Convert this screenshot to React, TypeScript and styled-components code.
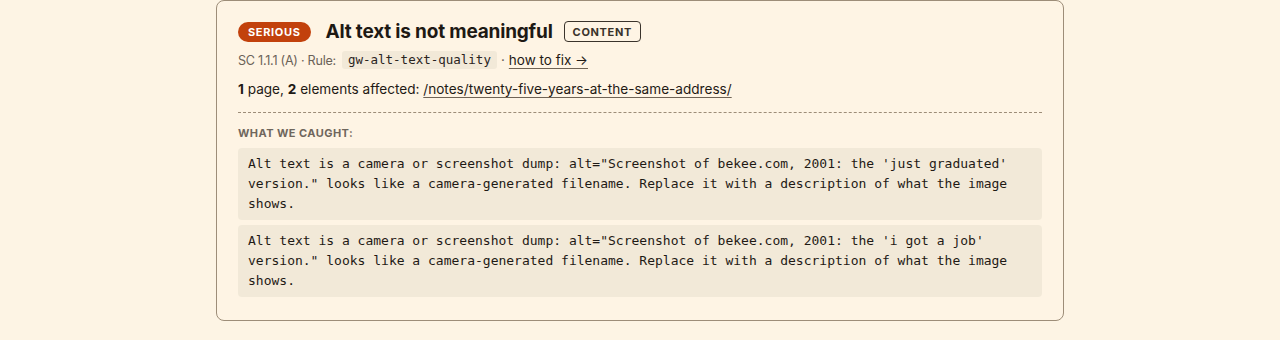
import React from "react";
import styled, { createGlobalStyle } from "styled-components";

const Global = createGlobalStyle`
  html, body { margin: 0; padding: 0; background: #fdf4e4; }
  body { font-family: Inter, "Liberation Sans", sans-serif; color: #1f1a15; }
`;

const Page = styled.div`
  padding: 0 0 19px;
`;

const Card = styled.section`
  box-sizing: border-box;
  width: 848px;
  margin: 0 auto;
  border: 1px solid #9d8d78;
  border-radius: 8px;
  padding: 19px 21px 23px;
  background: #fef4e4;
`;

const Head = styled.div`
  display: flex;
  align-items: center;
`;

const Severity = styled.span`
  display: inline-flex;
  align-items: center;
  height: 20px;
  padding: 0 10px;
  border-radius: 10px;
  background: #c2410c;
  color: #fff;
  font-size: 11px;
  font-weight: 700;
  letter-spacing: 0.06em;
  text-transform: uppercase;
`;

const Title = styled.h2`
  margin: 0 11px 0 15px;
  font-size: 19px;
  font-weight: 700;
  letter-spacing: -0.01em;
  color: #1d1914;
`;

const Tag = styled.span`
  box-sizing: border-box;
  display: inline-flex;
  align-items: center;
  height: 21px;
  padding: 0 8px;
  border: 1px solid #3a332b;
  border-radius: 4px;
  color: #3a332b;
  font-size: 11px;
  font-weight: 700;
  letter-spacing: 0.06em;
  text-transform: uppercase;
`;

const Meta = styled.div`
  margin-top: 8px;
  display: flex;
  align-items: center;
  gap: 4px;
  font-size: 13.5px;
  color: #6b6258;
`;

const Source = styled.span`
  font-size: 12.6px;
  letter-spacing: -0.02em;
  margin-right: 2px;
`;

const Chip = styled.code`
  font-family: "DejaVu Sans Mono", monospace;
  font-size: 12.5px;
  line-height: 18px;
  padding: 0 6px;
  border-radius: 3px;
  background: #f2e9d8;
  color: #2a241e;
`;

const Link = styled.a`
  color: #1f1a15;
  text-decoration: underline;
  text-underline-offset: 3px;
  text-decoration-thickness: 1px;
  text-decoration-color: #6f6355;
`;

const Affected = styled.p`
  margin: 12px 0 0;
  font-size: 13.6px;
  color: #1f1a15;
  b { font-weight: 700; }
`;

const Divider = styled.hr`
  margin: 15px 0 0;
  border: 0;
  border-top: 1px dashed #9d8d78;
`;

const Label = styled.div`
  margin-top: 13px;
  font-size: 11px;
  font-weight: 700;
  letter-spacing: 0.04em;
  text-transform: uppercase;
  color: #6f665c;
`;

const Findings = styled.div`
  margin-top: 8px;
  display: flex;
  flex-direction: column;
  gap: 5px;
`;

const Finding = styled.div`
  padding: 6px 10px;
  border-radius: 4px;
  background: #f2e9d8;
  font-family: "DejaVu Sans Mono", monospace;
  font-size: 13px;
  line-height: 20px;
  color: #1f1a15;
  white-space: pre-wrap;
`;

const findings = [
  `Alt text is a camera or screenshot dump: alt="Screenshot of bekee.com, 2001: the 'just graduated' version." looks like a camera-generated filename. Replace it with a description of what the image shows.`,
  `Alt text is a camera or screenshot dump: alt="Screenshot of bekee.com, 2001: the 'i got a job' version." looks like a camera-generated filename. Replace it with a description of what the image shows.`,
];

export default function App() {
  return (
    <Page>
      <Global />
      <Card>
        <Head>
          <Severity>Serious</Severity>
          <Title>Alt text is not meaningful</Title>
          <Tag>Content</Tag>
        </Head>
        <Meta>
          <Source>SC 1.1.1 (A) · Rule:</Source>
          <Chip>gw-alt-text-quality</Chip>
          <span>·</span>
          <Link href="#">how to fix →</Link>
        </Meta>
        <Affected>
          <b>1</b> page, <b>2</b> elements affected:{" "}
          <Link href="#">/notes/twenty-five-years-at-the-same-address/</Link>
        </Affected>
        <Divider />
        <Label>What we caught:</Label>
        <Findings>
          {findings.map((f, i) => (
            <Finding key={i}>{f}</Finding>
          ))}
        </Findings>
      </Card>
    </Page>
  );
}
